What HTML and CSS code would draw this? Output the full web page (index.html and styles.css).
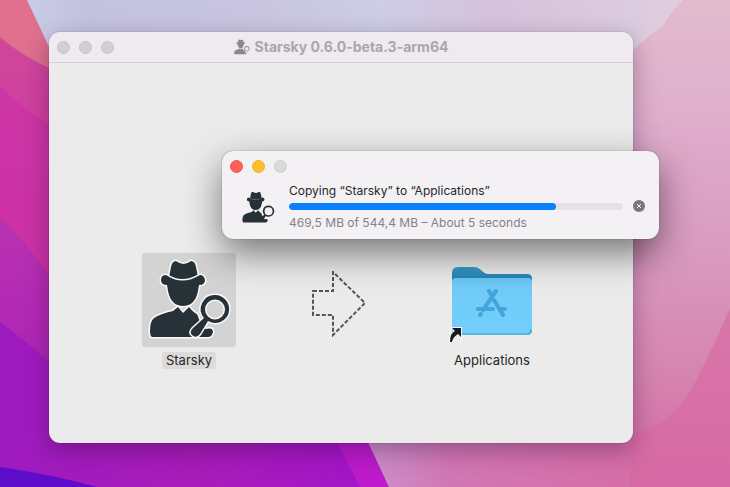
FILE: index.html
```
<!DOCTYPE html>
<html lang="en">
<head>
<meta charset="utf-8">
<meta name="viewport" content="width=device-width, initial-scale=1">
<title>Starsky 0.6.0-beta.3-arm64</title>
<link rel="stylesheet" href="styles.css">
</head>
<body>
<svg class="wallpaper" viewBox="0 0 730 487" preserveAspectRatio="none" aria-hidden="true">
  <defs>
    <linearGradient id="sky" x1="0" y1="0" x2="1" y2="0">
      <stop offset="0" stop-color="#cbd0e8"/><stop offset=".12" stop-color="#c3c2e0"/><stop offset=".35" stop-color="#c9c5e0"/>
      <stop offset=".52" stop-color="#cdcde4"/><stop offset=".68" stop-color="#d6c2dc"/><stop offset="1" stop-color="#e0d2e0"/>
    </linearGradient>
    <linearGradient id="magenta" x1="0" y1="0" x2="0" y2="1">
      <stop offset="0" stop-color="#d0479a"/><stop offset=".4" stop-color="#cf3da2"/><stop offset="1" stop-color="#cb33a6"/>
    </linearGradient>
    <linearGradient id="purple" x1="0" y1="0" x2="0" y2="1">
      <stop offset="0" stop-color="#b932b2"/><stop offset="1" stop-color="#ab22b6"/>
    </linearGradient>
    <linearGradient id="violet" x1="0" y1="0" x2="1" y2="0">
      <stop offset="0" stop-color="#9e1bc0"/><stop offset=".5" stop-color="#a91cba"/><stop offset="1" stop-color="#a214cb"/>
    </linearGradient>
    <linearGradient id="pink" x1="0" y1="0" x2="0" y2="1">
      <stop offset="0" stop-color="#e2bccd"/><stop offset=".25" stop-color="#dfafcc"/><stop offset=".55" stop-color="#da9cc2"/><stop offset=".85" stop-color="#d584b0"/><stop offset="1" stop-color="#d673a8"/>
    </linearGradient>
    <linearGradient id="rose" x1="0" y1="0" x2="1" y2="0">
      <stop offset="0" stop-color="#cb91cb"/><stop offset=".3" stop-color="#d277b5"/><stop offset="1" stop-color="#d66da6"/>
    </linearGradient>
    <linearGradient id="corner" x1="0" y1="0" x2="0" y2="1">
      <stop offset="0" stop-color="#d977a9"/><stop offset="1" stop-color="#d669a4"/>
    </linearGradient>
    <linearGradient id="blue" x1="0" y1="0" x2="1" y2="0">
      <stop offset="0" stop-color="#5c0dc9"/><stop offset="1" stop-color="#610bd0"/>
    </linearGradient>
  </defs>
  <rect width="730" height="487" fill="url(#sky)"/>
  <path d="M0 0H27L49 47 90 120H0Z" fill="#df708e"/>
  <path d="M0 37Q22 56 49 68L90 80V300H0Z" fill="url(#magenta)"/>
  <path d="M0 86Q24 110 49 124V300H0Z" fill="#cb2fa9" fill-opacity=".6"/>
  <path d="M0 218Q26 240 50 278V400H0Z" fill="url(#purple)"/>
  <path d="M0 322Q25 340 49 362L120 440H368L389 487H0Z" fill="url(#violet)"/>
  <path d="M336 440H368L389 487H360Z" fill="#bd1bcc"/>
  <path d="M0 467Q50 474 97 487H0Z" fill="url(#blue)"/>
  <path d="M683 0Q670 13 663 26Q646 37 632 52L600 90V440H730V0Z" fill="url(#pink)"/>
  <path d="M367 440H640V487H389Z" fill="url(#rose)"/>
  <path d="M730 308Q710 355 690 392Q668 426 630 434V487H730Z" fill="url(#corner)"/>
</svg>

<svg class="symbols" aria-hidden="true">
  <symbol id="detective" viewBox="0 0 94 94">
    <path d="M27 24 29 14Q30 8 34 8Q38 11 41.500 11Q45 11 49 8Q53 8 54 14L56 24Q41 31 27 24Z"/>
    <path d="M24 22Q40 33 58 22Q62 22 63 27Q63 32 57 32L56 38Q53 53 41 53Q29 53 26 38L25 32Q19 32 19 27Q19 22 24 22Z"/>
    <path d="M10 84Q8 83 8 78Q8 68 12 65Q18 61 31 58L36 54 41 60 47 54Q52 60 55 61Q60 75 64 76Q71 74 71 79Q70 84 66 84Z"/>
    <path fill-rule="evenodd" d="M73 42A14 14 0 1 1 66 68L58 81Q54 86 50 82Q47 79 51 75L62 65A14 14 0 0 1 73 42ZM73 46.500A10 10 0 1 0 73 66.500A10 10 0 1 0 73 46.500Z"/>
  </symbol>
</svg>

<main class="desktop">
  <section class="window" aria-label="Starsky installer">
    <header class="titlebar">
      <div class="lights">
        <button class="light" type="button" aria-label="Close"></button>
        <button class="light" type="button" aria-label="Minimize"></button>
        <button class="light" type="button" aria-label="Zoom"></button>
      </div>
      <h1 class="title"><svg class="title-icon" viewBox="7 7 82 80" aria-hidden="true"><use href="#detective" width="94" height="94"/></svg>Starsky 0.6.0-beta.3-arm64</h1>
    </header>
    <div class="files">
      <button class="file selected" type="button">
        <span class="tile"><svg class="app-icon" viewBox="0 0 94 94" aria-hidden="true"><use href="#detective"/></svg></span>
        <span class="label">Starsky</span>
      </button>
      <svg class="arrow" viewBox="0 0 56 66" aria-hidden="true"><path d="M1 20H21V1L53 32 21 64V44H1Z"/></svg>
      <button class="file" type="button">
        <span class="tile"><svg class="folder" viewBox="0 0 94 94" aria-hidden="true">
          <defs>
            <linearGradient id="back" x1="0" y1="0" x2="0" y2="1"><stop offset="0" stop-color="#3c98c8"/><stop offset=".2" stop-color="#1c81b5"/></linearGradient>
            <linearGradient id="front" x1="0" y1="0" x2="0" y2="1"><stop offset="0" stop-color="#69c6f2"/><stop offset=".15" stop-color="#70cbf8"/><stop offset="1" stop-color="#72cffc"/></linearGradient>
          </defs>
          <path d="M7 20Q7 14 13 14H29Q33 14 36 17Q40 21 43 21H82Q87 21 87 26V77Q87 82 82 82H12Q7 82 7 77Z" fill="url(#back)"/>
          <path d="M7 29Q7 25 11 25H83Q87 25 87 29V77Q87 82 82 82H12Q7 82 7 77Z" fill="url(#front)"/>
          <path d="M8 77Q8 81 12 81H82Q86 81 86 76" fill="none" stroke="#50acd0" stroke-width="1.500"/>
          <g fill="none" stroke="#43a5da" stroke-width="4" stroke-linecap="round">
            <path d="M44 38 47 43M51 38 38 57M33 56H48M56 56H60M35 62 36 61M49 47 58 62"/>
          </g>
          <path d="M5 89Q5 80 10 78L7 75H16V84L13 81Q8 84 7 89Z" fill="#17191e" stroke="#f4f4f4" stroke-width="2" paint-order="stroke"/>
        </svg></span>
        <span class="label">Applications</span>
      </button>
    </div>
  </section>

  <section class="copy" role="dialog" aria-labelledby="copy-title">
    <div class="lights">
      <button class="light close" type="button" aria-label="Close copy window"></button>
      <button class="light minimize" type="button" aria-label="Minimize copy window"></button>
      <button class="light" type="button" aria-label="Zoom copy window" disabled></button>
    </div>
    <div class="copy-row">
      <svg class="copy-icon" viewBox="7 7 82 80" aria-hidden="true"><use href="#detective" width="94" height="94"/></svg>
      <div class="status">
        <label class="copy-title" id="copy-title" for="copy-progress">Copying “Starsky” to “Applications”</label>
        <div class="bar-row">
          <progress class="bar" id="copy-progress" value="80" max="100"></progress>
          <button class="cancel" type="button" aria-label="Stop copying"><svg viewBox="0 0 12 12" aria-hidden="true"><path d="M4 4 8 8M8 4 4 8"/></svg></button>
        </div>
        <p class="detail">469,5 MB of 544,4 MB – About 5 seconds</p>
      </div>
    </div>
  </section>
</main>
</body>
</html>
```
FILE: styles.css
```
* { box-sizing: border-box; }

body {
  margin: 0;
  font-family: Inter, "Liberation Sans", sans-serif;
  font-size: 13px;
  line-height: 16px;
  color: #262626;
}

button {
  padding: 0;
  border: 0;
  background: none;
  font: inherit;
  color: inherit;
}

.symbols { position: absolute; width: 0; height: 0; }

.wallpaper {
  position: absolute;
  inset: 0;
  width: 100%;
  height: 100%;
}

.desktop {
  position: relative;
  display: flex;
  min-height: 100vh;
  padding: 32px 97px 44px 49px;
}

.window {
  flex: 1;
  display: flex;
  flex-direction: column;
  overflow: hidden;
  border-radius: 11px;
  background: #ebebeb;
  box-shadow: 0 0 1px rgba(0, 0, 0, .6), 0 8px 24px rgba(40, 10, 50, .35);
}

.titlebar {
  display: grid;
  grid-template-columns: 1fr auto 1fr;
  align-items: center;
  height: 31px;
  padding: 0 8px;
  border-bottom: 1px solid #d3cfd4;
  background: #efeaef;
}

.lights { display: flex; gap: 9px; }

.light {
  width: 13px;
  height: 13px;
  border: 1px solid #c6c2c6;
  border-radius: 50%;
  background: #d2ced2;
}

.title {
  display: flex;
  align-items: center;
  gap: 5px;
  margin: 0;
  font-size: 14px;
  font-weight: 700;
  color: #aaa6aa;
}

.title-icon {
  width: 16px;
  height: 16px;
  fill: #8b888c;
}

.files {
  display: grid;
  grid-template-columns: 94px 56px 96px;
  justify-content: center;
  align-items: start;
  gap: 76px;
  padding-top: 190px;
}

.file {
  display: flex;
  flex-direction: column;
  align-items: center;
  gap: 5px;
}

.tile {
  display: block;
  width: 94px;
  height: 94px;
  border-radius: 3px;
}

.tile svg { display: block; width: 100%; height: 100%; }

.label {
  padding: 0 4px;
  border-radius: 3px;
  line-height: 17px;
  white-space: nowrap;
}

.selected .tile { background: #d3d3d3; }
.selected .label { background: #dbdbdb; }

.app-icon {
  fill: #263238;
  stroke: #fafafa;
  stroke-width: 3px;
  paint-order: stroke;
}

.arrow {
  width: 56px;
  height: 66px;
  margin-top: 18px;
  fill: none;
  stroke: #555;
  stroke-width: 2px;
  stroke-dasharray: 4 2;
}

.copy {
  position: absolute;
  top: 151px;
  left: 222px;
  width: 437px;
  padding: 9px 14px 8px 8px;
  border-radius: 11px;
  background: #f4f1f5;
  box-shadow: 0 0 1px rgba(0, 0, 0, .6), 0 14px 36px rgba(0, 0, 0, .5);
}

.copy .light { border-color: #cecece; background: #dadada; }
.copy .close { border-color: #ed544e; background: #fe5f58; }
.copy .minimize { border-color: #eeae2e; background: #febc2f; }

.copy-row {
  display: flex;
  align-items: center;
  gap: 14px;
  padding: 10px 0 0 12px;
  font-size: 12px;
}

.copy-icon { width: 33px; height: 33px; fill: #263238; }

.status { flex: 1; }

.copy-title { display: block; }

.bar-row { display: flex; align-items: center; gap: 10px; height: 14px; }

.bar {
  flex: 1;
  height: 7px;
  min-width: 0;
  overflow: hidden;
  border: 0;
  border-radius: 4px;
  background: #e4e2e5;
  appearance: none;
}

.bar::-webkit-progress-bar { background: #e4e2e5; }
.bar::-webkit-progress-value { border-radius: 4px; background: #0a80ff; }
.bar::-moz-progress-bar { border-radius: 4px; background: #0a80ff; }

.cancel {
  display: flex;
  width: 12px;
  height: 12px;
  border-radius: 50%;
  background: #79777a;
}

.cancel svg {
  width: 12px;
  height: 12px;
  fill: none;
  stroke: #f4f1f5;
  stroke-width: 1px;
}

.detail { margin: 2px 0 0; color: #858287; }
```
